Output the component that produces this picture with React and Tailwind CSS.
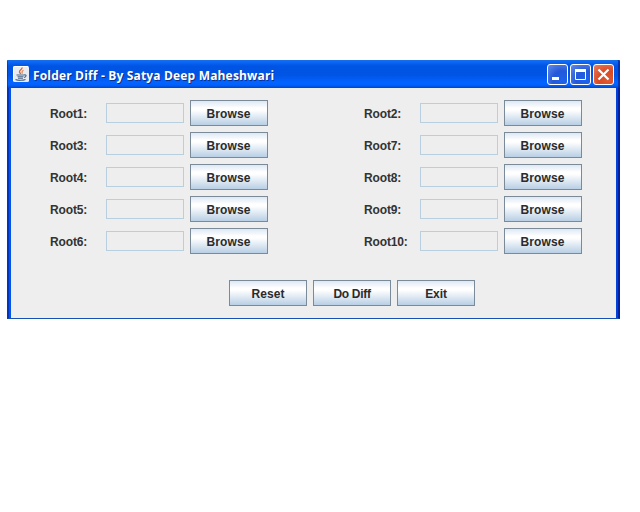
import React from 'react';

const leftRoots = ['Root1:', 'Root3:', 'Root4:', 'Root5:', 'Root6:'];
const rightRoots = ['Root2:', 'Root7:', 'Root8:', 'Root9:', 'Root10:'];

function MetalButton({ children, className = 'pr-[1px] tracking-[0.1px]' }) {
  return (
    <button className={`flex h-[26px] w-[78px] items-center justify-center border border-[#7a8a99] bg-[linear-gradient(to_bottom,#dde8f3_0%,#ffffff_30%,#ffffff_38%,#b8cfe5_100%)] pt-[2px] text-[12px] leading-none font-bold text-[#2b2b2b] ${className}`}>
      {children}
    </button>
  );
}

function RootColumn({ roots }) {
  return (
    <div className="flex w-[218px] flex-col gap-[6px]">
      {roots.map((root) => (
        <div key={root} className="flex h-[26px] items-center">
          <label className="w-14 pt-[2px] text-[12px] leading-none font-bold tracking-[-0.15px] text-[#333333]">{root}</label>
          <input disabled className="mr-[6px] h-[20px] w-[78px] border border-[#b8cfe0] bg-[#eeeeee]" />
          <MetalButton>Browse</MetalButton>
        </div>
      ))}
    </div>
  );
}

function JavaIcon() {
  return (
    <svg className="h-4 w-4" viewBox="0 0 16 16" fill="none">
      <rect width="16" height="16" rx="1.5" fill="#e6ecf2" />
      <path d="M0.5 15V1.5Q0.5 0.5 1.5 0.5H15" stroke="#ffffff" />
      <path d="M9 1.5C9.5 3.5 6 4 6.5 6C6.7 6.8 7.5 7.2 7.5 8" stroke="#d9663a" strokeWidth="1.4" />
      <path d="M10.5 4.2C8.8 5 8.6 6 9.3 7.7" stroke="#e0885a" strokeWidth="1.1" />
      <path d="M3.5 9H11M4.5 10.8H10.5M5 12.3H10M11 9C14 8.3 13.5 11 11 11.5M2.5 13.5C5 14.7 10 14.5 12.5 13.5" stroke="#4c6684" strokeWidth="1.1" />
    </svg>
  );
}

function ControlButton({ close, children }) {
  const color = close
    ? 'bg-[radial-gradient(circle_at_75%_80%,#dd5932_0%,#d94a23_45%,#e87f61_100%)]'
    : 'bg-[radial-gradient(circle_at_75%_80%,#1c62ee_0%,#2459d8_45%,#648cea_100%)]';
  return (
    <button className={`h-[21px] w-[21px] rounded-[3px] border border-white ${color}`}>
      <svg className="h-[19px] w-[19px]" viewBox="0 0 19 19" fill="none">
        {children}
      </svg>
    </button>
  );
}

function TitleBar() {
  return (
    <div className="flex h-7 items-center rounded-t-[1px] bg-[linear-gradient(to_bottom,#1a6fe8_0%,#0a66f5_8%,#0054e3_22%,#0055e5_55%,#0364ff_80%,#0260fb_90%,#0044c8_100%)] pr-[6px] pl-[6px] shadow-[inset_-2px_0_0_rgba(0,25,140,0.6),inset_1px_0_0_rgba(0,25,140,0.4)]">
      <JavaIcon />
      <span className="ml-1 flex-1 pt-[3px] font-['Open_Sans','Noto_Sans',sans-serif] text-[12px] leading-none font-bold tracking-[0.17px] whitespace-nowrap text-white [text-shadow:1px_1px_0_#0a318f]">
        Folder Diff - By Satya Deep Maheshwari
      </span>
      <div className="flex gap-[2px]">
        <ControlButton>
          <rect x="4" y="12" width="7" height="3" fill="white" />
        </ControlButton>
        <ControlButton>
          <path d="M4.5 5V14.5H14.5V5" stroke="white" />
          <path d="M4 5.5H15" stroke="white" strokeWidth="3" />
        </ControlButton>
        <ControlButton close>
          <path d="M4.5 4.5L14.5 14.5M14.5 4.5L4.5 14.5" stroke="white" strokeWidth="2.2" />
        </ControlButton>
      </div>
    </div>
  );
}

export default function App() {
  return (
    <main className="h-[512px] w-[640px] overflow-hidden bg-white pt-[60px] pl-[7px] font-['Liberation_Sans',Arial,sans-serif]">
      <section className="h-[259px] w-[613px]">
        <TitleBar />
        <div className="flex h-[231px] border-r-2 border-b border-l-2 border-r-[#001ea0] border-b-[#1650b4] border-l-[#0035c0]">
          <div className="flex-1 border-x-2 border-r-[#0041d8] border-l-[#0453ea] bg-[#eeeeee]">
            <div className="flex gap-24 pt-3 pl-[39px]">
              <RootColumn roots={leftRoots} />
              <RootColumn roots={rightRoots} />
            </div>
            <div className="mt-[26px] ml-[218px] flex gap-[6px]">
              <MetalButton className="tracking-[0.05px]">Reset</MetalButton>
              <MetalButton className="tracking-[-0.3px]">Do Diff</MetalButton>
              <MetalButton className="tracking-[-0.1px]">Exit</MetalButton>
            </div>
          </div>
        </div>
      </section>
    </main>
  );
}
